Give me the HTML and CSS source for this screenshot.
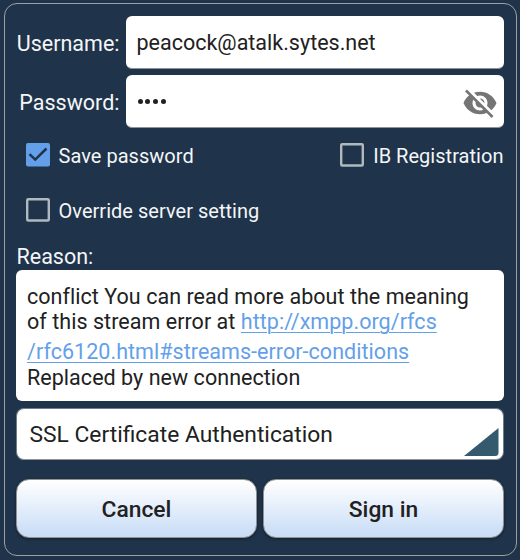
FILE: index.html
```html
<!DOCTYPE html>
<html lang="en">
<head>
<meta charset="utf-8">
<title>Sign in</title>
<link rel="stylesheet" href="styles.css">
</head>
<body>
<main class="dialog">
  <div class="row">
    <span class="label">Username:</span>
    <div class="field"><span class="user">peacock@atalk.sytes.net</span></div>
  </div>
  <div class="row">
    <span class="label">Password:</span>
    <div class="field">
      <span class="dots"><i></i><i></i><i></i><i></i></span>
      <svg class="eye" viewBox="0 0 24 24"><path fill="#757575" d="M12 7c2.76 0 5 2.24 5 5 0 .65-.13 1.26-.36 1.83l2.92 2.92c1.51-1.26 2.7-2.89 3.43-4.75-1.73-4.39-6-7.5-11-7.5-1.4 0-2.74.25-3.98.7l2.16 2.16C10.74 7.13 11.35 7 12 7zM2 4.27l2.28 2.28.46.46C3.08 8.3 1.78 10.02 1 12c1.73 4.39 6 7.5 11 7.5 1.55 0 3.03-.3 4.38-.84l.42.42L19.73 22 21 20.73 3.27 3 2 4.27zM7.53 9.8l1.55 1.55c-.05.21-.08.43-.08.65 0 1.66 1.34 3 3 3 .22 0 .44-.03.65-.08l1.55 1.55c-.67.33-1.41.53-2.2.53-2.76 0-5-2.24-5-5 0-.79.2-1.53.53-2.2zm4.31-.78l3.15 3.15.02-.16c0-1.66-1.34-3-3-3l-.17.01z"/></svg>
    </div>
  </div>
  <div class="checks first">
    <div class="check"><svg class="box" viewBox="0 0 24 24"><rect class="fill" width="24" height="23.500" rx="2"/><path d="M3.500 11.200 9.200 16.600 20.500 5.500"/></svg><span>Save password</span></div>
    <div class="check"><svg class="box" viewBox="0 0 24 24"><rect class="ring" x="1.200" y="1.200" width="21.600" height="21.300" rx="1"/></svg><span>IB Registration</span></div>
  </div>
  <div class="checks">
    <div class="check"><svg class="box" viewBox="0 0 24 24"><rect class="ring" x="1.200" y="1.200" width="21.600" height="21.300" rx="1"/></svg><span>Override server setting</span></div>
  </div>
  <div class="reason-label">Reason:</div>
  <div class="reason">
    <div class="line">conflict You can read more about the meaning</div>
    <div class="line l2">of this stream error at <span class="link">http://xmpp.org/rfcs</span></div>
    <div class="line l3"><span class="link">/rfc6120.html#streams-error-conditions</span></div>
    <div class="line l4">Replaced by new connection</div>
  </div>
  <div class="select"><span>SSL Certificate Authentication</span>
    <svg class="corner" viewBox="0 0 35 28"><path fill="#35596d" d="M0 28 34.500 0V24.500Q34.500 28 31 28Z"/></svg>
  </div>
  <div class="buttons">
    <div class="button">Cancel</div>
    <div class="button">Sign in</div>
  </div>
</main>
</body>
</html>
```
FILE: styles.css
```css
* { box-sizing: border-box; }
body {
  margin: 0;
  padding: 3px 3px 3px 4px;
  height: 560px;
  background: #1f334a;
  font-family: Roboto, sans-serif;
  font-size: 21.5px;
  color: #f4f6f8;
  white-space: nowrap;
}
.dialog {
  height: 553px;
  border: 1px solid #9f9f9f;
  border-radius: 13px;
  padding: 12px 12px 0 11px;
}
.row { display: flex; height: 53px; margin-bottom: 6px; }
.label {
  width: 103.500px;
  margin-right: 6.500px;
  line-height: 55px;
  text-align: right;
}
.field {
  flex: 1;
  display: flex;
  align-items: center;
  justify-content: space-between;
  padding: 1px 6.500px 0 10.500px;
  background: #fff;
  border-bottom: 1px solid #8d9399;
  border-radius: 6px;
  color: #212121;
}
.dots { display: flex; gap: 2.700px; padding-left: 1px; }
.dots i { width: 5px; height: 5px; border-radius: 50%; background: #212121; }
.eye { width: 36px; height: 36px; margin-top: 2px; }
.checks {
  display: flex;
  justify-content: space-between;
  height: 54px;
  padding-left: 9.500px;
  font-size: 20px;
}
.checks.first { height: 55px; margin-top: -6px; }
.check { display: flex; align-items: center; gap: 9px; letter-spacing: .03px; }
.check span { padding-top: 1px; }
.box { display: block; width: 24px; height: 24px; margin-top: -1px; }
.fill { fill: #649fe9; }
.ring { fill: none; stroke: #b0b9c0; stroke-width: 2.400; }
.first .check:last-child { margin-right: .5px; }
.box path { fill: none; stroke: #1f334a; stroke-width: 2.500; }
.reason-label { height: 33px; line-height: 40px; padding-left: .5px; }
.reason {
  height: 131px;
  padding: 14px 11px 0;
  background: #fff;
  border-radius: 6px;
  color: #212121;
  letter-spacing: .04px;
}
.line { height: 25px; line-height: 25px; }
.l2 { height: 30px; }
.l3 { height: 26px; }
.link { color: #649fe9; text-decoration: underline; text-decoration-thickness: 1px; text-underline-offset: 3px; }
.select {
  display: flex;
  justify-content: space-between;
  align-items: flex-end;
  height: 52px;
  margin: 7px 0 0;
  padding: 0 4px 3px 12.500px;
  background: #fff;
  border: 1px solid #6f7c89;
  border-bottom-color: #8d9399;
  border-radius: 8px;
  color: #212121;
  font-size: 22.8px;
}
.select span { line-height: 42px; }
.corner { width: 35px; height: 28px; }
.buttons { display: flex; gap: 6px; margin-top: 19px; }
.button {
  flex: 1;
  height: 59px;
  line-height: 59px;
  text-align: center;
  border: 1px solid #929292;
  border-radius: 13px;
  background: linear-gradient(#fff, #c7dcf6);
  box-shadow: 0 1px 3px rgba(0, 0, 0, .4);
  color: #212121;
  font-size: 22.8px;
  font-weight: 500;
}
```
